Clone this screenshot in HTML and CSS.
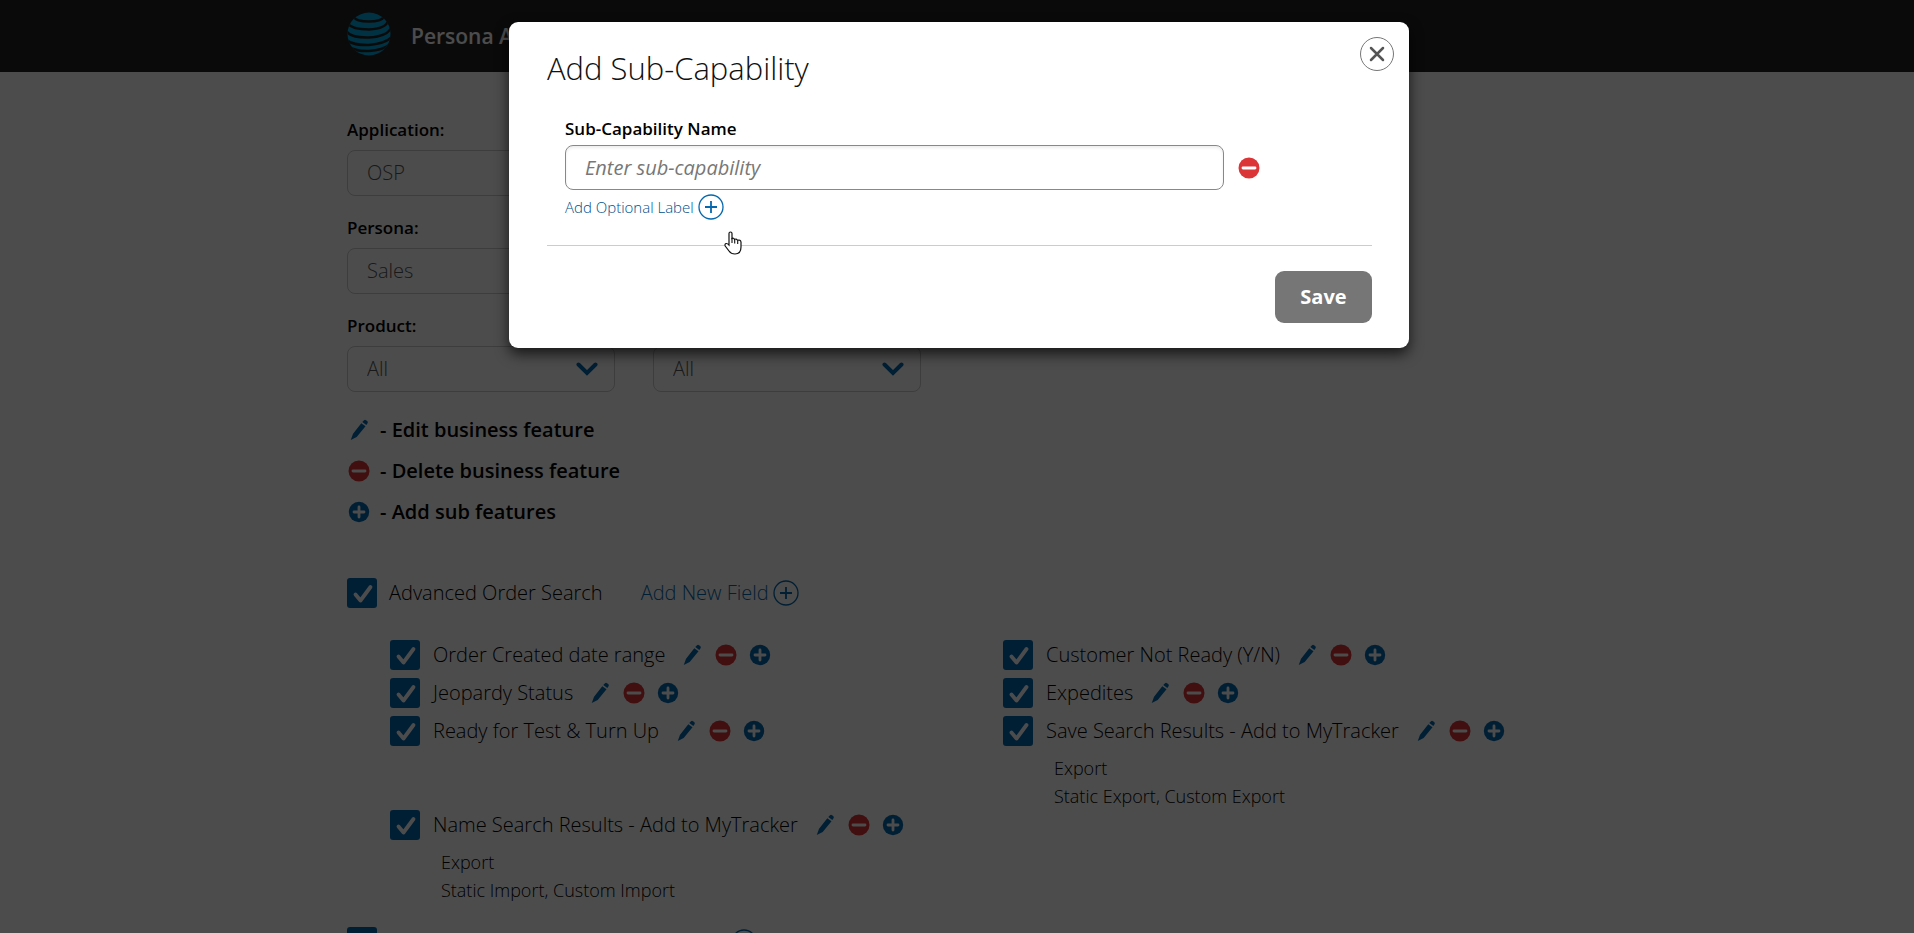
FILE: index.html
```html
<!DOCTYPE html>
<html lang="en">
<head>
<meta charset="utf-8">
<title>Persona Administration</title>
<link rel="stylesheet" href="styles.css">
</head>
<body>
<svg class="sprite" aria-hidden="true">
  <symbol id="pencil" viewBox="0 0 20 24"><path d="M1 23L3.500 16 12.500 4.500l4.600 3.500L7.500 19.700zM13.600 3.200L15.200 1.500Q16.500.400 17.700 1.300L19.200 2.500Q20 3.600 19.300 4.700L18 6.600z" fill="#0568ae"/></symbol>
  <symbol id="minus" viewBox="0 0 22 22"><circle cx="11" cy="11" r="10.500" fill="#dc3538"/><path d="M5 11h12" stroke="#fff" stroke-width="2.800" stroke-linecap="round"/></symbol>
  <symbol id="plus" viewBox="0 0 22 22"><circle cx="11" cy="11" r="10.200" fill="#0568ae"/><path d="M6 11h10M11 6v10" stroke="#fff" stroke-width="2.800" stroke-linecap="round"/></symbol>
  <symbol id="ring" viewBox="0 0 26 26"><circle cx="13" cy="13" r="12" fill="none" stroke="#0568ae" stroke-width="1.300"/><path d="M7 13h12M13 7v12" stroke="#0568ae" stroke-width="1.800"/></symbol>
</svg>

<header class="topbar">
  <div class="wrap brand">
    <svg class="globe" viewBox="0 0 44 44" aria-hidden="true">
      <defs><clipPath id="ball"><circle cx="22" cy="22" r="21.500"/></clipPath></defs>
      <g clip-path="url(#ball)">
        <rect width="44" height="44" fill="#00a8e0"/>
        <g fill="none" stroke="#222" stroke-width="2.600">
          <path d="M7 5Q9 9.500 22 9.500 34 9.500 37 5"/><path d="M0 10Q3 17.500 22 17.500Q39 16.500 41 9"/><path d="M-1 19Q4 26 22 25.500Q40 24.500 44 16"/><path d="M-1 28Q7 33.500 22 33Q38 31.500 45 25"/><path d="M2 35Q10 39.500 22 39Q36 38 42 33"/>
        </g>
      </g>
    </svg>
    <span class="brand-name">Persona Administration</span>
  </div>
</header>

<main class="wrap page">
  <form class="filters">
    <div class="field">
      <label for="app">Application:</label>
      <select id="app"><option>OSP</option></select>
    </div>
    <div class="field first">
      <label for="persona">Persona:</label>
      <select id="persona"><option>Sales</option></select>
    </div>
    <div class="field first">
      <label for="product">Product:</label>
      <select id="product"><option>All</option></select>
    </div>
    <div class="field">
      <label for="type">Type:</label>
      <select id="type"><option>All</option></select>
    </div>
  </form>

  <ul class="legend">
    <li><svg class="icon"><use href="#pencil"/></svg>- Edit business feature</li>
    <li><svg class="icon"><use href="#minus"/></svg>- Delete business feature</li>
    <li><svg class="icon"><use href="#plus"/></svg>- Add sub features</li>
  </ul>

  <section>
    <div class="group">
      <input type="checkbox" id="g1" checked><label for="g1">Advanced Order Search</label>
      <a class="add" href="#">Add New Field<svg class="ring"><use href="#ring"/></svg></a>
    </div>
    <div class="features">
      <div class="feature">
        <div class="row"><input type="checkbox" id="f1" checked><label for="f1">Order Created date range</label>
          <button aria-label="Edit"><svg class="icon"><use href="#pencil"/></svg></button><button aria-label="Delete"><svg class="icon"><use href="#minus"/></svg></button><button aria-label="Add"><svg class="icon"><use href="#plus"/></svg></button></div>
      </div>
      <div class="feature">
        <div class="row"><input type="checkbox" id="f2" checked><label for="f2">Customer Not Ready (Y/N)</label>
          <button aria-label="Edit"><svg class="icon"><use href="#pencil"/></svg></button><button aria-label="Delete"><svg class="icon"><use href="#minus"/></svg></button><button aria-label="Add"><svg class="icon"><use href="#plus"/></svg></button></div>
      </div>
      <div class="feature">
        <div class="row"><input type="checkbox" id="f3" checked><label for="f3">Jeopardy Status</label>
          <button aria-label="Edit"><svg class="icon"><use href="#pencil"/></svg></button><button aria-label="Delete"><svg class="icon"><use href="#minus"/></svg></button><button aria-label="Add"><svg class="icon"><use href="#plus"/></svg></button></div>
      </div>
      <div class="feature">
        <div class="row"><input type="checkbox" id="f4" checked><label for="f4">Expedites</label>
          <button aria-label="Edit"><svg class="icon"><use href="#pencil"/></svg></button><button aria-label="Delete"><svg class="icon"><use href="#minus"/></svg></button><button aria-label="Add"><svg class="icon"><use href="#plus"/></svg></button></div>
      </div>
      <div class="feature">
        <div class="row"><input type="checkbox" id="f5" checked><label for="f5">Ready for Test &amp; Turn Up</label>
          <button aria-label="Edit"><svg class="icon"><use href="#pencil"/></svg></button><button aria-label="Delete"><svg class="icon"><use href="#minus"/></svg></button><button aria-label="Add"><svg class="icon"><use href="#plus"/></svg></button></div>
      </div>
      <div class="feature">
        <div class="row"><input type="checkbox" id="f6" checked><label for="f6">Save Search Results - Add to MyTracker</label>
          <button aria-label="Edit"><svg class="icon"><use href="#pencil"/></svg></button><button aria-label="Delete"><svg class="icon"><use href="#minus"/></svg></button><button aria-label="Add"><svg class="icon"><use href="#plus"/></svg></button></div>
        <p class="sub">Export<br>Static Export, Custom Export</p>
      </div>
      <div class="feature">
        <div class="row"><input type="checkbox" id="f7" checked><label for="f7">Name Search Results - Add to MyTracker</label>
          <button aria-label="Edit"><svg class="icon"><use href="#pencil"/></svg></button><button aria-label="Delete"><svg class="icon"><use href="#minus"/></svg></button><button aria-label="Add"><svg class="icon"><use href="#plus"/></svg></button></div>
        <p class="sub">Export<br>Static Import, Custom Import</p>
      </div>
    </div>
    <div class="group">
      <input type="checkbox" id="g2" checked><label for="g2">Basic Order Search</label>
      <a class="add" href="#">Add New Field<svg class="ring"><use href="#ring"/></svg></a>
    </div>
  </section>
</main>

<div class="overlay">
  <div class="modal" role="dialog" aria-modal="true" aria-labelledby="title">
    <button class="close" aria-label="Close"><svg viewBox="0 0 16 16"><path d="M2 2l12 12M14 2L2 14" stroke="#555" stroke-width="2.500" stroke-linecap="round"/></svg></button>
    <h1 id="title">Add Sub-Capability</h1>
    <div class="entry">
      <label for="sub">Sub-Capability Name</label>
      <div class="entry-row">
        <input type="text" id="sub" placeholder="Enter sub-capability">
        <button aria-label="Remove"><svg class="icon"><use href="#minus"/></svg></button>
      </div>
      <a class="add small" href="#">Add Optional Label<svg class="ring"><use href="#ring"/></svg></a>
    </div>
    <div class="actions"><button class="save">Save</button></div>
  </div>
</div>

<svg class="cursor" viewBox="0 0 18 24" aria-hidden="true"><path d="M5 14V2.500Q5 1 6.500 1T8 2.500V7.500Q9.500 6.500 10.500 8.500 12.200 7.200 13.500 9.300 16.500 8.300 17 11V16Q17 23 11 23 7 23 5 20L1.200 15Q.500 13 2 12.500 3.500 12.300 5 14z" fill="#fff" stroke="#111" stroke-width="1.200"/><path d="M8 7v5M10.700 8.500v4M13.700 9.500v3.500" stroke="#111" stroke-width="1.100"/></svg>
</body>
</html>
```
FILE: styles.css
```css
* { box-sizing: border-box; }
body {
  margin: 0;
  height: 100vh;
  overflow: hidden;
  background: #fff;
  color: #000;
  font: 300 20px/30px "Open Sans", "Noto Sans", sans-serif;
}
.sprite { position: absolute; width: 0; height: 0; }
button { border: 0; padding: 0; background: none; font: inherit; display: flex; cursor: pointer; }
a { color: #0568ae; text-decoration: none; }
.wrap { width: 100%; max-width: 1220px; margin: 0 auto; }

.topbar { background: #222; height: 72px; display: flex; align-items: center; }
.brand { display: flex; align-items: center; gap: 20px; }
.globe { width: 44px; height: 44px; margin-bottom: 4px; }
.brand-name { color: #fff; font-size: 21px; font-weight: 600; }

.page { padding-top: 46px; }
.filters { display: grid; grid-template-columns: repeat(4, 268px); gap: 20px 38px; }
.field { display: flex; flex-direction: column; gap: 8px; }
.field.first { grid-column: 1; }
.field label { font-size: 17px; line-height: 24px; font-weight: 550; }
.field select {
  appearance: none;
  height: 46px;
  border: 1px solid #ccc;
  border-radius: 8px;
  padding: 0 19px;
  color: #555;
  font: inherit;
  background: url("data:image/svg+xml,%3Csvg xmlns='http://www.w3.org/2000/svg' width='22' height='14'%3E%3Cpath d='M2.500 2.500L11 11l8.500-8.500' fill='none' stroke='%230568ae' stroke-width='4' stroke-linecap='round'/%3E%3C/svg%3E") no-repeat right 16px center;
}

.legend { list-style: none; margin: 17px 0 0; padding: 0; font-weight: 600; }
.legend li { display: flex; align-items: center; gap: 10px; height: 41px; padding-left: 1px; }
.icon { width: 22px; height: 22px; display: block; }

.group { display: flex; align-items: center; height: 30px; margin-top: 46px; }
.group label { margin: 0 38px 0 12px; }
input[type="checkbox"] {
  appearance: none;
  flex: none;
  width: 30px;
  height: 30px;
  margin: 0;
  border-radius: 3px;
  background: #0568ae url("data:image/svg+xml,%3Csvg xmlns='http://www.w3.org/2000/svg' width='30' height='30'%3E%3Cpath d='M8.500 16.500l5 6L23.500 9' fill='none' stroke='white' stroke-width='3.800' stroke-linecap='round' stroke-linejoin='round'/%3E%3C/svg%3E") center;
}
.add { display: flex; align-items: center; gap: 4px; }
.ring { width: 26px; height: 26px; }

.features { display: grid; grid-template-columns: 613px 1fr; padding: 32px 0 0 43px; }
.row { display: flex; align-items: center; height: 30px; margin-bottom: 8px; white-space: nowrap; }
.row label { margin: 0 16px 0 13px; }
.row button { margin-right: 12px; }
.sub { margin: 0 0 0 51px; font-size: 18px; line-height: 28px; }
.features + .group { margin-top: 23px; }

.overlay {
  position: absolute;
  inset: 0;
  display: flex;
  justify-content: center;
  align-items: flex-start;
  padding: 22px 4px 0 8px;
  background: rgba(0, 0, 0, .7);
}
.modal {
  position: relative;
  width: 100%;
  max-width: 900px;
  padding: 24px 37px 25px 38px;
  border-radius: 9px;
  background: #fff;
  box-shadow: 0 6px 14px rgba(0, 0, 0, .7);
}
.modal h1 { margin: 0; font-size: 31px; line-height: 44px; font-weight: 300; color: #111; }
.close {
  position: absolute;
  top: 15px;
  right: 15px;
  width: 34px;
  height: 34px;
  border: 1px solid #777;
  border-radius: 50%;
  align-items: center;
  justify-content: center;
}
.close svg { width: 16px; height: 16px; }
.entry { padding: 27px 0 25px 18px; border-bottom: 1px solid #ccc; }
.entry label { display: block; font-size: 17px; line-height: 24px; font-weight: 550; margin-bottom: 4px; }
.entry-row { display: flex; align-items: center; gap: 14px; }
.entry-row input {
  flex: 0 1 659px;
  height: 45px;
  border: 1px solid #888;
  border-radius: 8px;
  padding: 0 19px;
  font: inherit;
  box-shadow: inset 0 2px 3px #eee;
}
.entry-row input::placeholder { color: #777; font-style: italic; font-weight: 400; opacity: 1; }
.small { margin-top: 4px; font-size: 15px; line-height: 24px; color: #00508c; }
.actions { display: flex; justify-content: flex-end; padding-top: 25px; }
.save {
  width: 97px;
  height: 52px;
  border-radius: 9px;
  background: #767676;
  color: #fff;
  font-weight: 700;
  align-items: center;
  justify-content: center;
}
.cursor { position: absolute; left: 724px; top: 231px; width: 18px; height: 24px; }
```
